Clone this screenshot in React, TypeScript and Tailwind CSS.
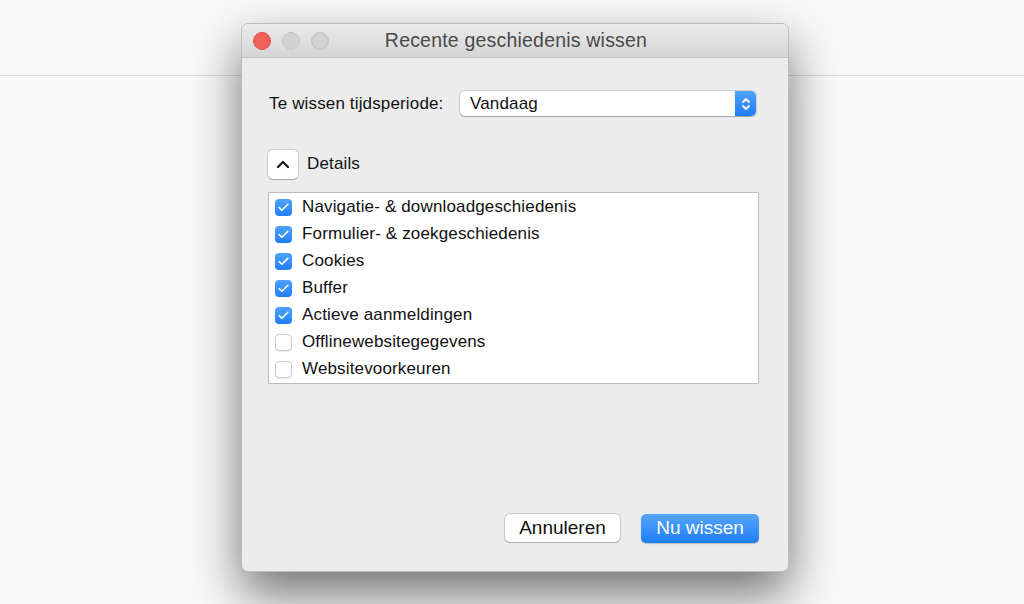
import { Check } from "lucide-react";

const items = [
  { label: "Navigatie- & downloadgeschiedenis", checked: true },
  { label: "Formulier- & zoekgeschiedenis", checked: true },
  { label: "Cookies", checked: true },
  { label: "Buffer", checked: true },
  { label: "Actieve aanmeldingen", checked: true },
  { label: "Offlinewebsitegegevens", checked: false },
  { label: "Websitevoorkeuren", checked: false },
];

function Box({ checked }: { checked: boolean }) {
  return checked ? (
    <div className="w-[17px] h-[17px] rounded-[4px] bg-gradient-to-b from-[#4fa3fb] to-[#1f7ef8] flex items-center justify-center shrink-0">
      <Check className="w-[13px] h-[13px] text-white" strokeWidth={3} />
    </div>
  ) : (
    <div className="w-[17px] h-[17px] rounded-[4px] bg-white border border-[#cdcdcd] shadow-[0_1px_1px_rgba(0,0,0,0.08)] shrink-0" />
  );
}

export default function App() {
  return (
    <div
      className="w-[1024px] h-[604px] bg-[#f9f9f9] relative overflow-hidden"
      style={{ fontFamily: '"Liberation Sans", Arial, sans-serif' }}
    >
      {/* page toolbar line behind dialog */}
      <div className="h-[76px] border-b border-[#d6d6d6]" />

      <div className="absolute left-[241px] top-[23px] w-[548px] h-[549px] rounded-[7px] bg-[#ececec] border border-[#bdbdbd] shadow-[0_22px_50px_rgba(0,0,0,0.55)] flex flex-col overflow-hidden">
        {/* title bar */}
        <div className="h-[34px] shrink-0 bg-gradient-to-b from-[#ebebeb] to-[#d5d5d5] border-b border-[#c2c2c2] flex items-center relative">
          <div className="flex gap-[11px] pl-[11px]">
            <div className="w-[18px] h-[18px] rounded-full bg-[#f0615a] border border-[#df4e46]" />
            <div className="w-[18px] h-[18px] rounded-full bg-[#d2d2d2] border border-[#c3c3c3]" />
            <div className="w-[18px] h-[18px] rounded-full bg-[#d2d2d2] border border-[#c3c3c3]" />
          </div>
          <div className="absolute inset-0 flex items-center justify-center pl-[2px] text-[19.5px] tracking-[0.2px] text-[#4a4a4a] pointer-events-none">
            Recente geschiedenis wissen
          </div>
        </div>

        {/* body */}
        <div className="flex-1 flex flex-col px-[26px] pt-[33px] pb-[28px] text-[17px] tracking-[0.15px] text-[#111]">
          <div className="flex items-center pl-[1px]">
            <span className="w-[191px]">Te wissen tijdsperiode:</span>
            <div className="w-[296px] h-[25px] rounded-[5px] bg-white shadow-[0_0_0_1px_rgba(0,0,0,0.12),0_1px_1px_rgba(0,0,0,0.2)] flex items-stretch overflow-hidden">
              <div className="flex-1 flex items-center pl-[10px]">Vandaag</div>
              <div className="w-[21px] bg-gradient-to-b from-[#4fa3fb] to-[#1d7cf7] flex items-center justify-center">
                <svg width="10" height="16" viewBox="0 0 10 16" fill="none" stroke="white" strokeWidth="1.8" strokeLinecap="round" strokeLinejoin="round">
                  <path d="M2 6 L5 3 L8 6" />
                  <path d="M2 10 L5 13 L8 10" />
                </svg>
              </div>
            </div>
          </div>

          <div className="flex items-center gap-[9px] mt-[33px]">
            <div className="w-[30px] h-[29px] rounded-[5px] bg-white shadow-[0_0_0_1px_rgba(0,0,0,0.12),0_1px_1px_rgba(0,0,0,0.2)] flex items-center justify-center">
              <svg width="14" height="9" viewBox="0 0 14 9" fill="none" stroke="#222" strokeWidth="2.4" strokeLinecap="round" strokeLinejoin="round">
                <path d="M2 7 L7 2 L12 7" />
              </svg>
            </div>
            <span>Details</span>
          </div>

          <div className="mt-[13px] w-[491px] h-[192px] bg-white border border-[#bcbcbc] pt-[1px] pl-[6px] flex flex-col">
            {items.map((it) => (
              <div key={it.label} className="h-[27px] flex items-center gap-[10px]">
                <Box checked={it.checked} />
                <span>{it.label}</span>
              </div>
            ))}
          </div>

          <div className="mt-auto flex justify-end gap-[21px] pr-[3px] tracking-normal">
            <div className="w-[115px] h-[28px] rounded-[5px] bg-white shadow-[0_0_0_1px_rgba(0,0,0,0.12),0_1px_1px_rgba(0,0,0,0.2)] flex items-center justify-center text-[19px] text-[#111]">
              Annuleren
            </div>
            <div className="w-[118px] h-[29px] rounded-[5px] bg-gradient-to-b from-[#54a6fc] to-[#1d7cf7] shadow-[0_1px_1px_rgba(0,0,0,0.2)] flex items-center justify-center text-[19px] text-white">
              Nu wissen
            </div>
          </div>
        </div>
      </div>
    </div>
  );
}
